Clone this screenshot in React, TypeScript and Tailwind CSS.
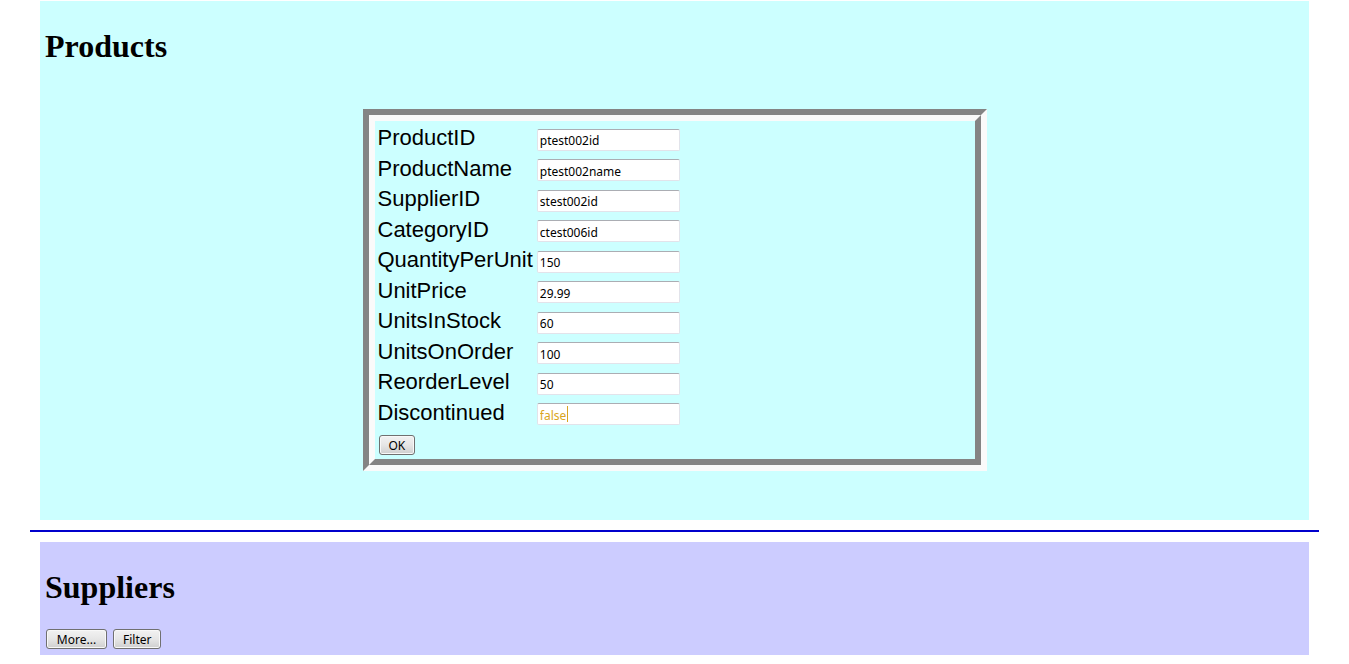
import { useState } from "react";

type Field = { name: string; value: string; active?: boolean };

const FIELDS: Field[] = [
  { name: "ProductID", value: "ptest002id" },
  { name: "ProductName", value: "ptest002name" },
  { name: "SupplierID", value: "stest002id" },
  { name: "CategoryID", value: "ctest006id" },
  { name: "QuantityPerUnit", value: "150" },
  { name: "UnitPrice", value: "29.99" },
  { name: "UnitsInStock", value: "60" },
  { name: "UnitsOnOrder", value: "100" },
  { name: "ReorderLevel", value: "50" },
  { name: "Discontinued", value: "false", active: true },
];

type ButtonProps = { label: string; type?: "button" | "submit"; className?: string };

function Button({ label, type = "button", className = "" }: ButtonProps) {
  return (
    <button
      type={type}
      className={`h-5 rounded-[3px] border border-[#707070] bg-linear-to-b from-[#f2f2f2] from-0% via-[#e6e6e6] via-50% to-[#cfcfcf] px-[9px] pt-0.5 font-['Noto_Sans',sans-serif] text-xs leading-4 text-black shadow-[inset_0_0_0_1px_#f8f8f8] ${className}`}
    >
      {label}
    </button>
  );
}

function FieldRow({ field }: { field: Field }) {
  const [value, setValue] = useState(field.value);
  return (
    <div className="col-span-2 grid grid-cols-subgrid items-baseline">
      <label htmlFor={field.name} className="text-[22px] leading-[26px]">
        {field.name}
      </label>
      <div className="relative flex">
        <input
          id={field.name}
          type="text"
          value={value}
          onChange={(e) => setValue(e.target.value)}
          className={`h-[22px] w-full rounded-[2px] border border-[#e2e3ea] border-t-[#abadb3] bg-white px-0.5 pt-0.5 font-['Noto_Sans',sans-serif] text-xs outline-none ${
            field.active ? "text-[#daa520]" : "text-black"
          }`}
        />
        {field.active && <span className="absolute left-[30px] top-[3px] h-4 w-px bg-[#daa520]" />}
      </div>
    </div>
  );
}

function Heading({ children }: { children: string }) {
  return (
    <h1 className="font-['Liberation_Serif',serif] text-[32px] font-bold leading-[37px]">{children}</h1>
  );
}

export default function App() {
  return (
    <main className="bg-white px-[30px] pt-px font-['Liberation_Sans',sans-serif] text-black">
      <section className="mx-2.5 bg-[#ccffff] px-[5px] pt-[27px] pb-[49px]">
        <Heading>Products</Heading>
        <div className="mx-auto mt-11 max-w-[624px] border-6 border-t-[#848484] border-r-[#fafafa] border-b-[#fafafa] border-l-[#848484]">
          <form
            onSubmit={(e) => e.preventDefault()}
            className="border-6 border-t-[#fafafa] border-r-[#848484] border-b-[#848484] border-l-[#fafafa] px-[3px] py-1"
          >
            <div className="grid h-[305px] grid-cols-[max-content_143px] grid-rows-10 gap-x-1">
              {FIELDS.map((field) => (
                <FieldRow key={field.name} field={field} />
              ))}
            </div>
            <div className="mt-[5px] ml-px flex">
              <Button label="OK" type="submit" />
            </div>
          </form>
        </div>
      </section>
      <hr className="my-2.5 border-t-2 border-[#0000cc]" />
      <section className="mx-2.5 bg-[#ccccff] px-[5px] pt-[27px] pb-1.5">
        <Heading>Suppliers</Heading>
        <div className="mt-[23px] ml-px flex gap-1.5">
          <Button label="More..." className="min-w-[61px]" />
          <Button label="Filter" />
        </div>
      </section>
    </main>
  );
}
